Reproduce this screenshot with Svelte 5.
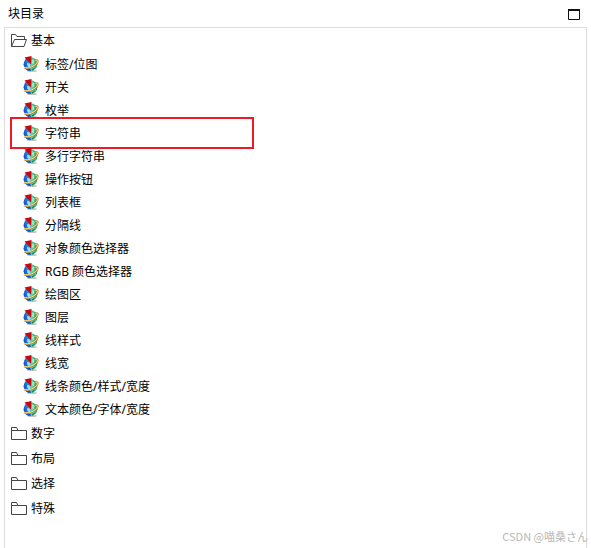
<script>
  let folders = $state([
    {
      name: '基本',
      open: true,
      items: [
        '标签/位图', '开关', '枚举', '字符串', '多行字符串', '操作按钮', '列表框', '分隔线',
        '对象颜色选择器', 'RGB 颜色选择器', '绘图区', '图层', '线样式', '线宽',
        '线条颜色/样式/宽度', '文本颜色/字体/宽度'
      ]
    },
    { name: '数字', open: false, items: [] },
    { name: '布局', open: false, items: [] },
    { name: '选择', open: false, items: [] },
    { name: '特殊', open: false, items: [] }
  ]);
  const marked = '字符串';
</script>

<main>
  <header>
    <h1>块目录</h1>
    <button class="maximize" aria-label="最大化">
      <svg width="12" height="13" viewBox="0 -2 12 13">
        <path d="M.5 1v9.5h11V1" fill="none" stroke="#111" />
        <path d="M0 0h12v2H0z" fill="#111" />
      </svg>
    </button>
  </header>

  <section class="tree">
    {#each folders as folder}
      <button class="folder" aria-expanded={folder.open} onclick={() => (folder.open = !folder.open)}>
        <svg width="16" height="13" viewBox="0 0 16 13" fill="none" stroke="#444">
          {#if folder.open}
            <path d="M.5 12.5V.5h4l1.500 2h7.500v3M.5 12.500l3-7h12l-2.500 7z" />
          {:else}
            <path d="M.5 12.500V.5h5l1.500 3M.5 3.500h15v9H.5" />
          {/if}
        </svg>
        <span>{folder.name}</span>
      </button>
      {#if folder.open && folder.items.length}
        <ul>
          {#each folder.items as item}
            <li class:marked={item === marked}>
              <button class="item">
                <svg width="16" height="17" viewBox="0 0 16 17">
                  <defs>
                    <linearGradient id="globe" x1="0" y1=".6" x2="1" y2=".4">
                      <stop offset="0" stop-color="#1546c8" />
                      <stop offset=".35" stop-color="#2190e0" />
                      <stop offset=".55" stop-color="#62cfc4" />
                      <stop offset=".8" stop-color="#3db878" />
                      <stop offset="1" stop-color="#1e8a5a" />
                    </linearGradient>
                  </defs>
                  <ellipse cx="9" cy="15" rx="5" ry="1" fill="#c4c4c4" />
                  <circle cx="7.500" cy="8.200" r="6.900" fill="url(#globe)" />
                  <path d="M4 7l2.500.5 1 2.500-1 1.500L4.500 10z" fill="#9be8f6" />
                  <path d="M9.500 3l2 1.500-.5 3-1.500 1-.5-3z" fill="#a4ecc4" />
                  <path d="M3 12.500l4 .5 1 1.800c-2.500.3-4.500-.6-5.500-2.300z" fill="#1350c4" />
                  <path d="M9 13l3-1.500c-.5 1.700-1.500 2.700-3 3.200z" fill="#168a54" />
                  <path d="M1 11.500c4 1.800 12-.8 13.800-5.800.2-1.300-.8-1.700-2.300-1.300" fill="none" stroke="#b98a2e" stroke-width="1.800" />
                  <path d="M1 11.200c4 1.800 11.800-.8 13.600-5.600.2-1-.8-1.300-2.100-1" fill="none" stroke="#ffdf8c" stroke-width="1" />
                  <path d="M1.500 1.500L8.500 0 8 8.500z" fill="#c9050d" />
                </svg>
                <span>{item}</span>
              </button>
            </li>
          {/each}
        </ul>
      {/if}
    {/each}
  </section>

  <p class="credit">CSDN @喵桑さん</p>
</main>

<style>
  :global(body) {
    margin: 0;
    background: #fff;
  }
  main {
    position: relative;
    display: flex;
    flex-direction: column;
    box-sizing: border-box;
    min-height: 100vh;
    padding: 0 4px;
    color: #000;
    font: 12px/16px 'Noto Sans', 'Noto Sans CJK SC', sans-serif;
  }
  header {
    display: flex;
    align-items: center;
    justify-content: space-between;
    height: 27px;
    padding: 0 7px 0 4px;
  }
  h1 {
    margin: 0;
    font-size: 12px;
    font-weight: 400;
  }
  button {
    display: flex;
    align-items: center;
    margin: 0;
    padding: 0;
    border: 0;
    background: none;
    color: inherit;
    font: inherit;
    text-align: left;
    white-space: nowrap;
  }
  svg {
    flex: none;
    display: block;
  }
  .tree {
    flex: 1;
    border: 1px solid #dcdcdc;
    border-bottom: 0;
  }
  .folder {
    gap: 4px;
    width: 100%;
    height: 25px;
    padding-left: 6px;
  }
  ul {
    margin: 0;
    padding: 0;
    list-style: none;
  }
  li {
    position: relative;
  }
  .item {
    gap: 6px;
    width: 100%;
    height: 23px;
    padding-left: 18px;
  }
  .marked::after {
    content: '';
    position: absolute;
    top: -5px;
    bottom: -4px;
    left: 5px;
    box-sizing: border-box;
    width: 244px;
    border: 2px solid #ed1c24;
    pointer-events: none;
  }
  .credit {
    position: absolute;
    right: 3px;
    bottom: 4px;
    margin: 0;
    color: #b8b8b8;
    font: 11px/16px 'Noto Sans CJK SC', sans-serif;
  }
</style>
